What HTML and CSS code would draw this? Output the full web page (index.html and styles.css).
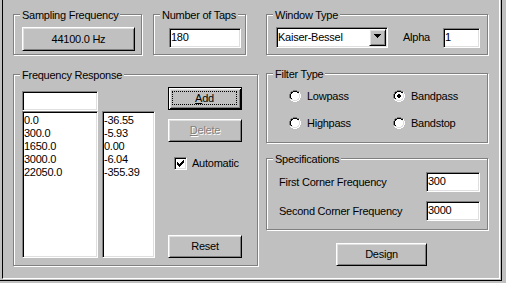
FILE: index.html
```html
<!DOCTYPE html>
<html>
<head>
<meta charset="utf-8">
<title>Filter Design</title>
<link rel="stylesheet" href="styles.css">
</head>
<body>
<svg class="defs" width="0" height="0" aria-hidden="true">
  <defs>
    <symbol id="radio" viewBox="0 0 12 12">
      <path fill="#808080" d="M4 0h4v1h-4z M2 1h2v1h-2z M8 1h2v1h-2z M1 2h1v2h-1z M0 4h1v4h-1z M1 8h1v1h-1z"/>
      <path fill="#ffffff" d="M10 2h1v2h-1z M11 4h1v4h-1z M10 8h1v2h-1z M1 9h1v1h-1z M2 10h2v1h-2z M8 10h2v1h-2z M4 11h4v1h-4z"/>
      <path fill="#000000" d="M4 1h4v1h-4z M2 2h2v1h-2z M8 2h2v1h-2z M2 3h1v1h-1z M1 4h1v4h-1z M2 8h1v1h-1z"/>
      <path fill="#dfdfdf" d="M9 3h1v1h-1z M10 4h1v4h-1z M9 8h1v1h-1z M2 9h2v1h-2z M8 9h2v1h-2z M4 10h4v1h-4z"/>
      <path fill="#ffffff" d="M4 2h4v1h-4z M3 3h6v1h-6z M2 4h8v4h-8z M3 8h6v1h-6z M4 9h4v1h-4z"/>
    </symbol>
  </defs>
</svg>
<div class="frame">
  <div class="page">
    <div class="col col-left">
      <div class="toprow">
        <div class="group g-sampling">
          <div class="legend">Sampling Frequency</div>
          <div class="btn btn-hz">44100.0 Hz</div>
        </div>
        <div class="group g-taps">
          <div class="legend">Number of Taps</div>
          <div class="edit edit-taps">180</div>
        </div>
      </div>
      <div class="group g-freq">
        <div class="legend">Frequency Response</div>
        <div class="freq-body">
          <div class="freq-col">
            <div class="edit edit-freq"></div>
            <div class="list list-a">
              <div class="item">0.0</div>
              <div class="item">300.0</div>
              <div class="item">1650.0</div>
              <div class="item">3000.0</div>
              <div class="item">22050.0</div>
            </div>
          </div>
          <div class="list list-b">
            <div class="item">-36.55</div>
            <div class="item">-5.93</div>
            <div class="item">0.00</div>
            <div class="item">-6.04</div>
            <div class="item">-355.39</div>
          </div>
          <div class="freq-actions">
            <div class="btn btn-default btn-action"><span class="focus"><u>A</u>dd</span></div>
            <div class="btn btn-action btn-disabled btn-delete"><u>D</u>elete</div>
            <div class="check-row">
              <span class="checkbox">
                <svg width="7" height="7" viewBox="0 0 7 7" shape-rendering="crispEdges"><path fill="#000" d="M6 0h1v1h-1z M5 1h2v1h-2z M0 2h1v1h-1z M4 2h3v1h-3z M0 3h2v1h-2z M3 3h3v1h-3z M0 4h5v1h-5z M1 5h3v1h-3z M2 6h1v1h-1z"/></svg>
              </span>
              <span class="check-label">Automatic</span>
            </div>
            <div class="btn btn-action btn-reset">Reset</div>
          </div>
        </div>
      </div>
    </div>
    <div class="col col-right">
      <div class="group g-window">
        <div class="legend">Window Type</div>
        <div class="window-row">
          <div class="edit combo">
            <span class="combo-text">Kaiser-Bessel</span>
            <span class="btn combo-btn">
              <svg width="7" height="4" viewBox="0 0 7 4" shape-rendering="crispEdges"><path fill="#000" d="M0 0h7v1h-1v1h-1v1h-1v1h-1v-1h-1v-1h-1v-1h-1z"/></svg>
            </span>
          </div>
          <span class="alpha-label">Alpha</span>
          <div class="edit edit-alpha">1</div>
        </div>
      </div>
      <div class="group g-filter">
        <div class="legend">Filter Type</div>
        <div class="radios">
          <div class="radio"><svg class="radio-icon" width="12" height="12" shape-rendering="crispEdges"><use href="#radio"/></svg><span class="radio-label">Lowpass</span></div>
          <div class="radio"><svg class="radio-icon" width="12" height="12" shape-rendering="crispEdges"><use href="#radio"/><path fill="#000" d="M5 4h2v1h-2z M4 5h4v2h-4z M5 7h2v1h-2z"/></svg><span class="radio-label">Bandpass</span></div>
          <div class="radio"><svg class="radio-icon" width="12" height="12" shape-rendering="crispEdges"><use href="#radio"/></svg><span class="radio-label">Highpass</span></div>
          <div class="radio"><svg class="radio-icon" width="12" height="12" shape-rendering="crispEdges"><use href="#radio"/></svg><span class="radio-label">Bandstop</span></div>
        </div>
      </div>
      <div class="group g-specs">
        <div class="legend">Specifications</div>
        <div class="spec-row spec-row-first">
          <span class="spec-label">First Corner Frequency</span>
          <div class="edit edit-spec">300</div>
        </div>
        <div class="spec-row">
          <span class="spec-label">Second Corner Frequency</span>
          <div class="edit edit-spec">3000</div>
        </div>
      </div>
      <div class="btn btn-design">Design</div>
    </div>
  </div>
</div>
</body>
</html>
```
FILE: styles.css
```css
html, body {
  margin: 0;
  padding: 0;
}

body {
  width: 506px;
  height: 283px;
  overflow: hidden;
  background: #c0c0c0;
  color: #000;
  font-family: "Liberation Sans", Arial, sans-serif;
  font-size: 11px;
  letter-spacing: -0.25px;
  line-height: 13px;
}

.defs {
  position: absolute;
  width: 0;
  height: 0;
  overflow: hidden;
}

/* outer window frame */
.frame {
  width: 502px;
  height: 281px;
  box-sizing: border-box;
  border-right: 1px solid #000;
  border-bottom: 1px solid #000;
  padding: 0 1px 1px 2px;
}

.page {
  height: 100%;
  box-sizing: border-box;
  border-left: 1px solid #000;
  border-right: 1px solid #fff;
  border-bottom: 1px solid #fff;
  display: flex;
  gap: 8px;
  padding: 14px 0 0 10px;
}

.col {
  display: flex;
  flex-direction: column;
}

.col-left {
  width: 245px;
}

.col-right {
  width: 222px;
}

/* etched group box */
.group {
  box-sizing: border-box;
  border: 1px solid #808080;
  box-shadow: inset 1px 1px 0 #fff, 1px 1px 0 #fff;
}

.legend {
  display: table;
  margin: -6px 0 0 6px;
  padding: 0 2px;
  background: #c0c0c0;
  line-height: 13px;
  white-space: nowrap;
}

/* raised push button */
.btn {
  box-sizing: border-box;
  display: flex;
  align-items: center;
  justify-content: center;
  background: #c0c0c0;
  border: 1px solid;
  border-color: #fff #000 #000 #fff;
  box-shadow: inset 1px 1px 0 #dfdfdf, inset -1px -1px 0 #808080;
  white-space: nowrap;
}

.btn-default {
  border: 1px solid #000;
  box-shadow: inset 1px 1px 0 #fff, inset -1px -1px 0 #000, inset 2px 2px 0 #dfdfdf, inset -2px -2px 0 #808080;
}

.focus {
  flex: 1;
  align-self: stretch;
  margin: 3px 4px 4px 3px;
  border: 1px dotted #000;
  display: flex;
  align-items: center;
  justify-content: center;
}

.btn-disabled {
  color: #808080;
  text-shadow: 1px 1px 0 #fff;
}

/* sunken edit */
.edit {
  box-sizing: border-box;
  height: 20px;
  background: #fff;
  border: 1px solid;
  border-color: #808080 #fff #fff #808080;
  box-shadow: inset 1px 1px 0 #000, inset -1px -1px 0 #dfdfdf;
  padding: 0 1px;
  line-height: 17px;
  white-space: nowrap;
}

/* top row */
.toprow {
  display: flex;
  gap: 11px;
  height: 41px;
}

.g-sampling {
  width: 129px;
  height: 41px;
}

.g-taps {
  width: 93px;
  height: 41px;
}

.btn-hz {
  width: 113px;
  height: 24px;
  margin: 5px 0 0 8px;
}

.edit-taps {
  width: 72px;
  margin: 6px 0 0 15px;
}

/* frequency response */
.g-freq {
  height: 192px;
  margin-top: 19px;
}

.freq-body {
  display: flex;
  margin-left: 8px;
}

.freq-col {
  display: flex;
  flex-direction: column;
  width: 76px;
  margin-top: 9px;
}

.list {
  box-sizing: border-box;
  background: #fff;
  border: 1px solid;
  border-color: #808080 #fff #fff #808080;
  box-shadow: inset 1px 1px 0 #000, inset -1px -1px 0 #dfdfdf;
  padding: 2px 0 0 1px;
  height: 147px;
}

.item {
  line-height: 13px;
  white-space: nowrap;
}

.list-b {
  width: 53px;
  margin: 29px 0 0 4px;
}

.freq-actions {
  display: flex;
  flex-direction: column;
  width: 74px;
  height: 171px;
  margin: 5px 0 0 13px;
}

.btn-action {
  height: 23px;
}

.btn-delete {
  margin-top: 9px;
}

.check-row {
  display: flex;
  align-items: center;
  height: 13px;
  margin: 15px 0 0 6px;
}

.checkbox {
  box-sizing: border-box;
  width: 13px;
  height: 13px;
  background: #fff;
  border: 1px solid;
  border-color: #808080 #fff #fff #808080;
  box-shadow: inset 1px 1px 0 #000, inset -1px -1px 0 #dfdfdf;
  padding: 2px 0 0 2px;
  display: flex;
}

.checkbox svg {
  display: block;
}

.check-label {
  margin-left: 5px;
}

.btn-reset {
  margin-top: auto;
}

/* window type */
.g-window {
  height: 41px;
}

.window-row {
  display: flex;
  align-items: flex-start;
  margin: 5px 7px 0 9px;
}

.combo {
  width: 112px;
  height: 21px;
  display: flex;
  padding: 0 0 0 1px;
}

.combo-text {
  flex: 1;
  line-height: 19px;
}

.combo-btn {
  width: 17px;
  height: 17px;
  margin: 1px 1px 1px 0;
  padding-bottom: 3px;
}

.combo-btn svg {
  display: block;
}

.alpha-label {
  margin-left: 15px;
  line-height: 21px;
}

.edit-alpha {
  width: 37px;
  margin: 1px 0 0 auto;
}

/* filter type */
.g-filter {
  height: 70px;
  margin-top: 18px;
}

.radios {
  display: grid;
  grid-template-columns: 104px 104px;
  row-gap: 15px;
  margin: 9px 0 0 22px;
}

.radio {
  display: flex;
  align-items: center;
  height: 12px;
  line-height: 12px;
}

.radio-icon {
  display: block;
  flex: none;
}

.radio-label {
  margin-left: 6px;
}

/* specifications */
.g-specs {
  height: 72px;
  margin-top: 15px;
}

.spec-row {
  display: flex;
  align-items: center;
  height: 20px;
  margin: 9px 7px 0 12px;
}

.spec-row-first {
  margin-top: 6px;
}

.spec-label {
  line-height: 20px;
  white-space: nowrap;
}

.edit-spec {
  width: 54px;
  margin-left: auto;
}

.btn-design {
  width: 91px;
  height: 23px;
  margin: 13px 0 0 70px;
}
```
